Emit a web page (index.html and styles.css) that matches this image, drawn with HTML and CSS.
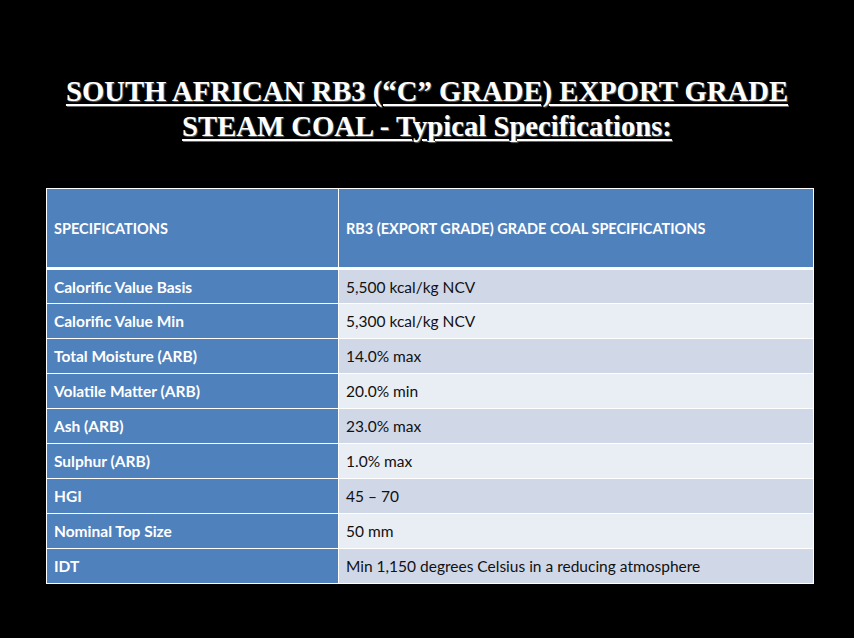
FILE: index.html
```html
<!DOCTYPE html>
<html>
<head>
<meta charset="utf-8">
<link rel="stylesheet" href="styles.css">
</head>
<body>
<div class="slide">
  <h1 class="title">SOUTH AFRICAN RB3 (“C” GRADE) EXPORT GRADE<br>STEAM COAL - Typical Specifications:</h1>
  <table class="spec">
    <thead>
      <tr><th class="c1">SPECIFICATIONS</th><th class="c2">RB3 (EXPORT GRADE) GRADE COAL SPECIFICATIONS</th></tr>
    </thead>
    <tbody>
      <tr><th>Calorific Value Basis</th><td>5,500 kcal/kg NCV</td></tr>
      <tr><th>Calorific Value Min</th><td>5,300 kcal/kg NCV</td></tr>
      <tr><th>Total Moisture (ARB)</th><td>14.0% max</td></tr>
      <tr><th>Volatile Matter (ARB)</th><td>20.0% min</td></tr>
      <tr><th>Ash (ARB)</th><td>23.0% max</td></tr>
      <tr><th>Sulphur (ARB)</th><td>1.0% max</td></tr>
      <tr><th>HGI</th><td>45 – 70</td></tr>
      <tr><th>Nominal Top Size</th><td>50 mm</td></tr>
      <tr><th>IDT</th><td>Min 1,150 degrees Celsius in a reducing atmosphere</td></tr>
    </tbody>
  </table>
</div>
</body>
</html>
```

FILE: styles.css
```css
html, body {
  margin: 0;
  padding: 0;
  background: #000;
}
.slide {
  width: 854px;
  height: 638px;
  background: #000;
  padding-top: 74px;
  box-sizing: border-box;
}
.title {
  margin: 0;
  font-family: "Liberation Serif", "Times New Roman", serif;
  font-weight: bold;
  font-size: 28.7px;
  line-height: 35px;
  color: #fff;
  text-align: center;
  text-decoration: underline;
  text-decoration-thickness: 2px;
  text-underline-offset: 3px;
  text-shadow: 1px 1px 1px #666;
}
.spec {
  margin: 44px 0 0 46px;
  width: 768px;
  border-collapse: collapse;
  font-family: "Lato", "Open Sans", sans-serif;
  font-size: 15.5px;
  table-layout: fixed;
  border-top: 1px solid #fff;
  border-left: 1px solid #fff;
}
.spec th, .spec td {
  text-align: left;
  padding: 0 7px;
  height: 35px;
  border: 1px solid #fff;
  border-top: none;
  border-left: none;
  box-sizing: border-box;
}
.spec thead th {
  background: #4f81bd;
  color: #fff;
  font-weight: bold;
  font-size: 14.5px;
  height: 80px;
  border-bottom: 3px solid #fff;
}
.spec .c1 { width: 292px; }
.spec tbody th {
  background: #4f81bd;
  color: #fff;
  font-weight: bold;
}
.spec tbody td {
  color: #111;
  background: #d0d8e8;
}
.spec tbody tr:nth-child(even) td {
  background: #e9edf4;
}
```
